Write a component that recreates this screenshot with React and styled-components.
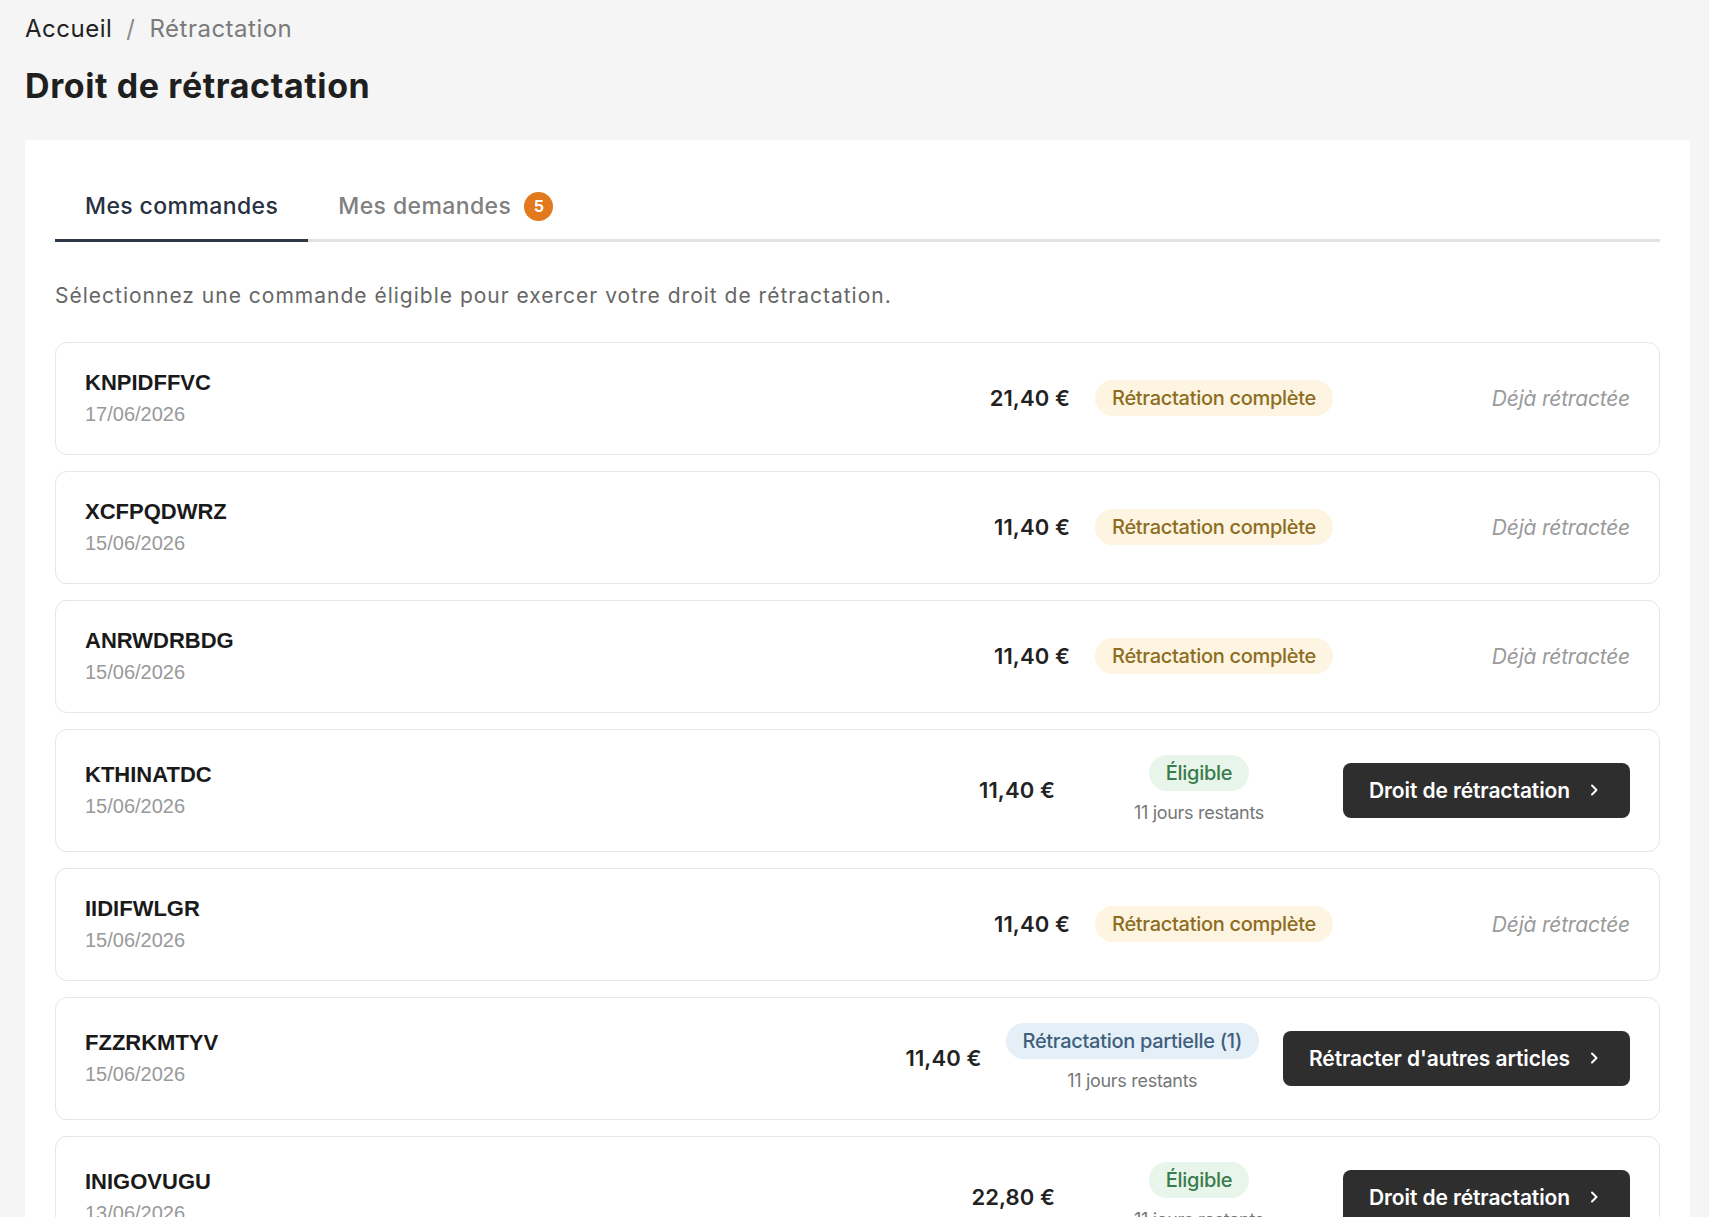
import React from 'react';
import styled, { createGlobalStyle } from 'styled-components';

const GlobalStyle = createGlobalStyle`
  * {
    box-sizing: border-box;
  }
  body {
    margin: 0;
    background: #f5f5f5;
    font-family: Inter, 'Noto Sans', sans-serif;
    color: #222;
  }
`;

const Page = styled.div`
  padding: 13px 19px 40px 25px;
`;

const Breadcrumb = styled.nav`
  display: flex;
  align-items: center;
  gap: 14px;
  font-size: 24px;
  line-height: 32px;
  letter-spacing: 0.5px;
`;

const Crumb = styled.span`
  color: ${p => (p.current ? '#7a7a7a' : '#222')};
`;

const Separator = styled.span`
  color: #8a8a8a;
`;

const Title = styled.h1`
  margin: 21px 0 34px;
  font-size: 34px;
  line-height: 40px;
  font-weight: 700;
  color: #1f1f1f;
  letter-spacing: 0.6px;
`;

const Card = styled.section`
  background: #fff;
  border-radius: 2px;
  padding: 36px 30px 30px;
`;

const TabList = styled.div`
  display: flex;
  border-bottom: 3px solid #e2e2e2;
`;

const Tab = styled.div`
  display: flex;
  align-items: center;
  gap: 13px;
  padding: 15px 30px 18px;
  margin-bottom: -3px;
  font-size: 23px;
  line-height: 30px;
  font-weight: 500;
  letter-spacing: 0.4px;
  color: ${p => (p.active ? '#27313f' : '#808080')};
  border-bottom: 3px solid ${p => (p.active ? '#2d3745' : 'transparent')};
  cursor: pointer;
`;

const CountBadge = styled.span`
  width: 29px;
  height: 29px;
  border-radius: 50%;
  background: #e2791c;
  color: #fff;
  font-size: 16px;
  font-weight: 700;
  letter-spacing: 0;
  display: flex;
  align-items: center;
  justify-content: center;
`;

const Intro = styled.p`
  margin: 40px 0 32px;
  font-size: 21px;
  line-height: 28px;
  color: #666;
  letter-spacing: 1px;
`;

const OrderList = styled.div`
  display: flex;
  flex-direction: column;
  gap: 16px;
`;

const OrderRow = styled.div`
  display: flex;
  align-items: center;
  gap: 24px;
  padding: 25px 29px 26px;
  border: 1px solid #e6e6e6;
  border-radius: 12px;
  background: #fff;
`;

const OrderInfo = styled.div`
  flex: 1;
  display: flex;
  flex-direction: column;
`;

const OrderId = styled.div`
  font-family: 'Liberation Sans', Arial, sans-serif;
  font-weight: 700;
  font-size: 22px;
  line-height: 30px;
  color: #1a1a1a;
`;

const OrderDate = styled.div`
  margin-top: 2px;
  font-family: 'Liberation Sans', Arial, sans-serif;
  font-size: 20px;
  line-height: 28px;
  color: #999;
`;

const Price = styled.div`
  font-size: 22px;
  font-weight: 600;
  color: #222;
  letter-spacing: 0.1px;
  white-space: nowrap;
`;

const StatusCol = styled.div`
  min-width: 240px;
  display: flex;
  flex-direction: column;
  align-items: center;
  gap: 10px;
`;

const tones = {
  full: { bg: '#fdf4e2', fg: '#8d6d21' },
  eligible: { bg: '#e7f5ea', fg: '#3b7a4b' },
  partial: { bg: '#e5eff7', fg: '#3e5f7d' },
};

const StatusBadge = styled.span`
  display: inline-block;
  padding: 6px 17px;
  border-radius: 20px;
  font-size: 20px;
  line-height: 24px;
  font-weight: 500;
  letter-spacing: -0.3px;
  white-space: nowrap;
  background: ${p => tones[p.tone].bg};
  color: ${p => tones[p.tone].fg};
`;

const Remaining = styled.span`
  font-size: 18px;
  line-height: 24px;
  color: #777;
  letter-spacing: -0.3px;
`;

const ActionCol = styled.div`
  min-width: 272px;
  display: flex;
  justify-content: flex-end;
`;

const Done = styled.span`
  font-size: 21px;
  font-style: italic;
  color: #9a9a9a;
  letter-spacing: -0.2px;
`;

const ActionButton = styled.button`
  display: flex;
  align-items: center;
  gap: 18px;
  height: 55px;
  padding: 0 30px 0 26px;
  border: none;
  border-radius: 8px;
  background: #2e2e2e;
  color: #fff;
  font-family: Inter, 'Noto Sans', sans-serif;
  font-size: 21px;
  font-weight: 600;
  letter-spacing: -0.1px;
  cursor: pointer;
  white-space: nowrap;
`;

const Chevron = () => (
  <svg width="12" height="14" viewBox="0 0 12 14" fill="none">
    <path d="M4 2.5 L8.5 7 L4 11.5" stroke="#fff" strokeWidth="2" strokeLinecap="round" strokeLinejoin="round" />
  </svg>
);

const orders = [
  { id: 'KNPIDFFVC', date: '17/06/2026', price: '21,40 €', status: 'full' },
  { id: 'XCFPQDWRZ', date: '15/06/2026', price: '11,40 €', status: 'full' },
  { id: 'ANRWDRBDG', date: '15/06/2026', price: '11,40 €', status: 'full' },
  { id: 'KTHINATDC', date: '15/06/2026', price: '11,40 €', status: 'eligible' },
  { id: 'IIDIFWLGR', date: '15/06/2026', price: '11,40 €', status: 'full' },
  { id: 'FZZRKMTYV', date: '15/06/2026', price: '11,40 €', status: 'partial' },
  { id: 'INIGOVUGU', date: '13/06/2026', price: '22,80 €', status: 'eligible' },
];

const statusLabel = {
  full: 'Rétractation complète',
  eligible: 'Éligible',
  partial: 'Rétractation partielle (1)',
};

const OrderItem = ({ order }) => {
  const open = order.status !== 'full';
  return (
    <OrderRow>
      <OrderInfo>
        <OrderId>{order.id}</OrderId>
        <OrderDate>{order.date}</OrderDate>
      </OrderInfo>
      <Price>{order.price}</Price>
      <StatusCol>
        <StatusBadge tone={order.status}>{statusLabel[order.status]}</StatusBadge>
        {open && <Remaining>11 jours restants</Remaining>}
      </StatusCol>
      <ActionCol>
        {open ? (
          <ActionButton>
            {order.status === 'partial' ? "Rétracter d'autres articles" : 'Droit de rétractation'}
            <Chevron />
          </ActionButton>
        ) : (
          <Done>Déjà rétractée</Done>
        )}
      </ActionCol>
    </OrderRow>
  );
};

export default function App() {
  return (
    <Page>
      <GlobalStyle />
      <Breadcrumb>
        <Crumb>Accueil</Crumb>
        <Separator>/</Separator>
        <Crumb current>Rétractation</Crumb>
      </Breadcrumb>
      <Title>Droit de rétractation</Title>
      <Card>
        <TabList>
          <Tab active>Mes commandes</Tab>
          <Tab>
            Mes demandes
            <CountBadge>5</CountBadge>
          </Tab>
        </TabList>
        <Intro>Sélectionnez une commande éligible pour exercer votre droit de rétractation.</Intro>
        <OrderList>
          {orders.map(o => (
            <OrderItem key={o.id} order={o} />
          ))}
        </OrderList>
      </Card>
    </Page>
  );
}
